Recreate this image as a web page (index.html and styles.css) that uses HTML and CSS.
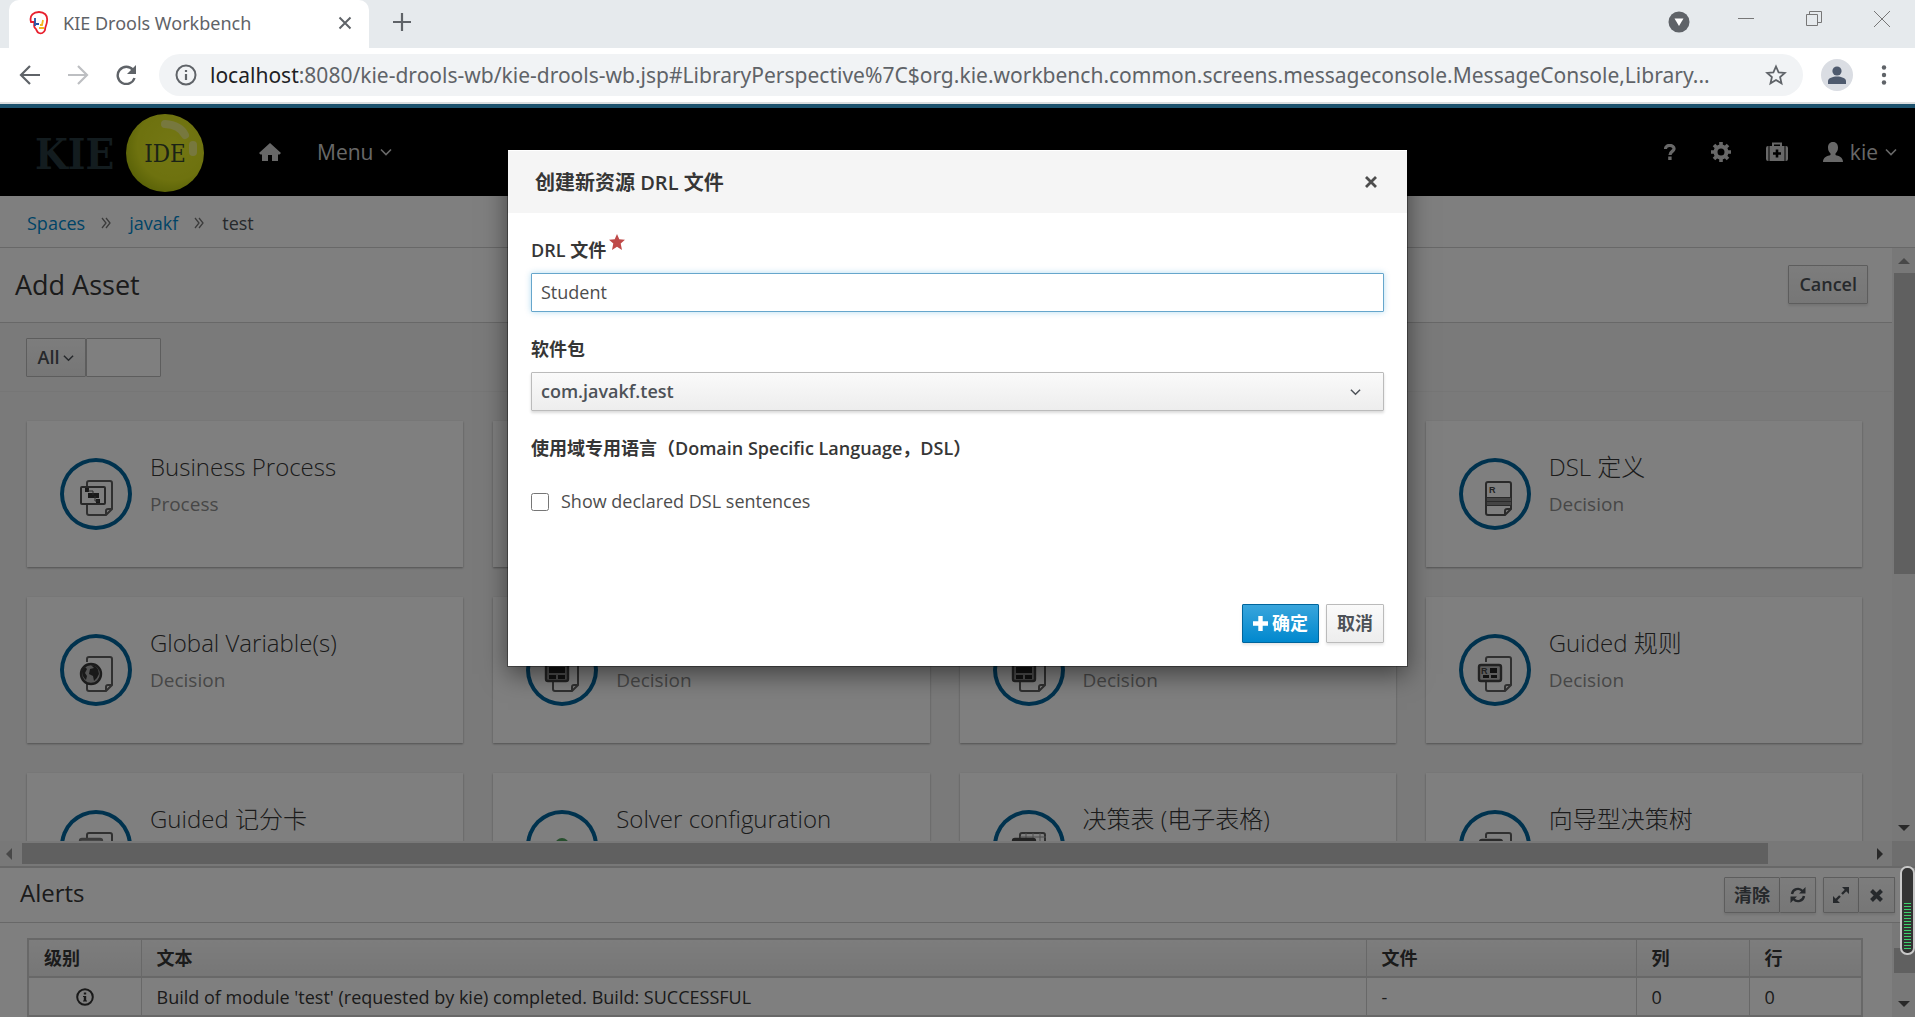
FILE: index.html
```html
<!DOCTYPE html>
<html lang="zh-CN">
<head>
<meta charset="utf-8">
<title>KIE Drools Workbench</title>
<link rel="stylesheet" href="styles.css">
</head>
<body>
<svg class="sprite" aria-hidden="true">
  <symbol id="chevron" viewBox="0 0 12 8"><path d="M1 1.5l5 5 5-5" fill="none" stroke="currentColor" stroke-width="1.6"/></symbol>
  <symbol id="angles" viewBox="0 0 10 12"><path d="M1 1l4 5-4 5M5 1l4 5-4 5" fill="none" stroke="currentColor" stroke-width="1.3"/></symbol>
  <symbol id="page" viewBox="0 0 72 72"><path d="M27 28v-3q0-2 2-2h21q2 0 2 2v26l-6 6H29q-2 0-2-2v-8M46 56v-3q0-2 2-2h4" fill="none" stroke="#606060" stroke-width="2"/></symbol>
  <symbol id="calc" viewBox="0 0 72 72"><use href="#page"/><rect x="20" y="21" width="22" height="26" rx="2" fill="#999" stroke="#444" stroke-width="2.4"/><path d="M23 33h16v6H23zM23 41h7v4h-7zM32 41h7v4h-7z" fill="#222"/></symbol>
</svg>

<header class="browser">
  <div class="tabstrip">
    <div class="tab">
      <svg class="favicon" width="20" height="24" viewBox="0 0 20 24"><path d="M2 11C0 4 5 1 10 1s9 3 8 9c0 4-2 5-2 9-1 3-4 4-6 3-3-1-2-4-4-5-2-2 0-4-1-6H2z" fill="#fff" stroke="#e8202e" stroke-width="1.800"/><path d="M6 7v8M7 13h3" stroke="#2453a6" stroke-width="1.800"/><path d="M14 9l-1 5h-2M10 17h5" fill="none" stroke="#f3b81b" stroke-width="1.800"/></svg>
      <span class="tab-title">KIE Drools Workbench</span>
      <button class="plain" aria-label="Close tab"><svg width="14" height="14" viewBox="0 0 14 14"><path d="M1.500 1.500l11 11m0-11l-11 11" stroke="#5f6368" stroke-width="2"/></svg></button>
    </div>
    <button class="plain new-tab" aria-label="New tab"><svg width="18" height="18" viewBox="0 0 18 18"><path d="M9 0v18M0 9h18" stroke="#5f6368" stroke-width="2.200"/></svg></button>
    <div class="window-buttons">
      <svg class="tab-search" width="22" height="22" viewBox="0 0 22 22"><circle cx="11" cy="11" r="10.500" fill="#5f6368"/><path d="M6.500 7.500h9L11 15z" fill="#fff"/></svg>
      <button class="plain" aria-label="Minimize"><svg width="16" height="16" viewBox="0 0 16 16"><path d="M0 7.500h16" stroke="#777"/></svg></button>
      <button class="plain" aria-label="Restore"><svg width="16" height="16" viewBox="0 0 16 16"><path d="M.5 3.500h11v11H.5zM3.500 3.500v-3h12v11h-4" fill="none" stroke="#777"/></svg></button>
      <button class="plain" aria-label="Close"><svg width="16" height="16" viewBox="0 0 16 16"><path d="M0 0l16 16M16 0L0 16" stroke="#777"/></svg></button>
    </div>
  </div>
  <div class="toolbar">
    <button class="plain" aria-label="Back"><svg width="22" height="20" viewBox="0 0 22 20"><path d="M21 10H2M11 1l-9 9 9 9" fill="none" stroke="#5f6368" stroke-width="2.200"/></svg></button>
    <button class="plain" aria-label="Forward"><svg width="22" height="20" viewBox="0 0 22 20"><path d="M1 10h19M11 1l9 9-9 9" fill="none" stroke="#bdbfc2" stroke-width="2.200"/></svg></button>
    <button class="plain" aria-label="Reload"><svg width="22" height="20" viewBox="0 0 22 20"><path d="M18 5a8.600 8.600 0 1 0 1.500 8" fill="none" stroke="#5f6368" stroke-width="2.400"/><path d="M21 0v9h-9z" fill="#5f6368"/></svg></button>
    <div class="address">
      <svg width="22" height="22" viewBox="0 0 22 22"><circle cx="11" cy="11" r="9.500" fill="none" stroke="#5f6368" stroke-width="2"/><path d="M11 10v6M11 6v2" stroke="#5f6368" stroke-width="2.200"/></svg>
      <span class="url"><b>localhost</b>:8080/kie-drools-wb/kie-drools-wb.jsp#LibraryPerspective%7C$org.kie.workbench.common.screens.messageconsole.MessageConsole,Library...</span>
      <svg width="22" height="22" viewBox="0 0 22 22"><path d="M11 2.500l2.600 5.800 6.200.6-4.700 4.200 1.400 6.200L11 16l-5.500 3.300 1.400-6.200-4.700-4.200 6.200-.6z" fill="none" stroke="#5f6368" stroke-width="1.800"/></svg>
    </div>
    <svg class="avatar" width="32" height="32" viewBox="0 0 32 32"><circle cx="16" cy="16" r="16" fill="#dadde3"/><circle cx="16" cy="12" r="4.600" fill="#4e5a6e"/><path d="M7 25v-3c0-3 5-4.500 9-4.500s9 1.500 9 4.500v3z" fill="#4e5a6e"/></svg>
    <button class="plain" aria-label="More"><svg width="6" height="20" viewBox="0 0 6 20"><circle cx="3" cy="2.500" r="2.200" fill="#5f6368"/><circle cx="3" cy="10" r="2.200" fill="#5f6368"/><circle cx="3" cy="17.500" r="2.200" fill="#5f6368"/></svg></button>
  </div>
</header>

<div class="app">
  <nav class="navbar">
    <a class="brand" href="#" aria-label="KIE IDE">
      <svg width="170" height="80" viewBox="0 0 170 80">
        <defs><radialGradient id="ball" cx=".6" cy=".4" r=".65"><stop offset="0" stop-color="#e8ee28"/><stop offset=".7" stop-color="#dce41e"/><stop offset="1" stop-color="#b4c410"/></radialGradient></defs>
        <text x="0" y="57" class="logo-kie">KIE</text>
        <circle cx="130" cy="41" r="39" fill="url(#ball)"/>
        <path d="M130 12q15 1 20 11" fill="none" stroke="#eef07c" stroke-width="8" stroke-linecap="round"/>
        <path d="M158 33v7" stroke="#eef07c" stroke-width="8" stroke-linecap="round"/>
        <text x="130" y="50" text-anchor="middle" class="logo-ide">IDE</text>
      </svg>
    </a>
    <a class="home" href="#" aria-label="Home"><svg width="22" height="18" viewBox="0 0 22 18"><path d="M11 0l11 10-1.500 1.500H19V18h-6v-6H9v6H3v-6.500H1.500L0 10z" fill="currentColor"/></svg></a>
    <button class="plain nav-menu">Menu <svg width="12" height="8"><use href="#chevron"/></svg></button>
    <div class="nav-tools">
      <a href="#" aria-label="Help"><svg width="12" height="16" viewBox="0 0 12 16"><path d="M1.500 5C1.500 0 10.500.5 10 5c-.3 2.500-4 2.500-4 6" fill="none" stroke="currentColor" stroke-width="3.200"/><path d="M4.200 12.500h3.400V16H4.200z" fill="currentColor"/></svg></a>
      <a href="#" aria-label="Settings"><svg width="20" height="20" viewBox="0 0 20 20"><circle cx="10" cy="10" r="5.500" fill="none" stroke="currentColor" stroke-width="4"/><path d="M10 0v4M10 16v4M0 10h4M16 10h4M3 3l3 3M14 14l3 3M3 17l3-3M14 6l3-3" stroke="currentColor" stroke-width="3.600"/></svg></a>
      <a href="#" aria-label="Administration"><svg width="22" height="20" viewBox="0 0 22 20"><path d="M7 5V1.500h8V5" fill="none" stroke="currentColor" stroke-width="2"/><path d="M0 6q0-2 2-2h.5v15H2q-2 0-2-2zM3.500 4h15v15h-15zM19.500 4h.5q2 0 2 2v11q0 2-2 2h-.5z" fill="currentColor"/><path d="M11 7.500v8M7 11.500h8" stroke="#000" stroke-width="2.600"/></svg></a>
      <a class="user" href="#"><svg width="20" height="20" viewBox="0 0 20 20"><path d="M10 0c3.500 0 5 2.500 5 5.500S14 10 12.500 11.500V13c3 1 7.500 2 7.500 7H0c0-5 4.500-6 7.500-7v-1.500C6 10 5 8.500 5 5.500S6.500 0 10 0z" fill="currentColor"/></svg><span>kie</span><svg width="12" height="8"><use href="#chevron"/></svg></a>
    </div>
  </nav>

  <ol class="breadcrumb">
    <li><a href="#">Spaces</a></li>
    <li><svg width="10" height="12"><use href="#angles"/></svg><a href="#">javakf</a></li>
    <li><svg width="10" height="12"><use href="#angles"/></svg><span>test</span></li>
  </ol>

  <main class="workspace">
    <section class="library">
      <div class="library-head"><h1>Add Asset</h1><button class="btn">Cancel</button></div>
      <form class="filter">
        <button type="button" class="btn filter-type">All <svg width="11" height="8"><use href="#chevron"/></svg></button><input type="text" aria-label="Filter">
      </form>
      <div class="cards">
        <article class="card"><svg class="card-icon" viewBox="0 0 72 72"><use href="#page"/><rect x="21" y="29" width="24" height="17" rx="1" fill="#fff" stroke="#505050" stroke-width="2"/><path d="M25 30h4v4h-4zM28 35h11v5H28zM36 41h4v4h-4z" fill="#333"/><path d="M28 33h5v4M35 38v5h4" fill="none" stroke="#555"/></svg><div><h2>Business Process</h2><p>Process</p></div></article>
        <article class="card"></article>
        <article class="card"></article>
        <article class="card"><svg class="card-icon" viewBox="0 0 72 72"><path d="M29 24h21q2 0 2 2v25l-6 6H29q-2 0-2-2V26q0-2 2-2zM46 57v-4q0-2 2-2h4" fill="none" stroke="#555" stroke-width="2"/><path d="M28 39h24v9H28z" fill="#888"/><path d="M27 39.500h25M27 43.500h25M27 47.500h25" stroke="#555"/><text x="30" y="35" class="glyph">R</text></svg><div><h2>DSL 定义</h2><p>Decision</p></div></article>

        <article class="card"><svg class="card-icon" viewBox="0 0 72 72"><use href="#page"/><circle cx="31" cy="40" r="10" fill="#aaa" stroke="#383838" stroke-width="2.400"/><path d="M31 31q8 1 8 9-2 5-5 7l-1-5-4-2 1-5 4-1zM22 37l3-4 2 2-2 4 2 3-1 4q-4-3-4-9z" fill="#333"/></svg><div><h2>Global Variable(s)</h2><p>Decision</p></div></article>
        <article class="card"><svg class="card-icon" viewBox="0 0 72 72"><use href="#calc"/></svg><div><h2>&nbsp;</h2><p>Decision</p></div></article>
        <article class="card"><svg class="card-icon" viewBox="0 0 72 72"><use href="#calc"/></svg><div><h2>&nbsp;</h2><p>Decision</p></div></article>
        <article class="card"><svg class="card-icon" viewBox="0 0 72 72"><use href="#page"/><rect x="20" y="31" width="22" height="16" rx="2" fill="#bbb" stroke="#444" stroke-width="2.400"/><text x="22" y="40" class="glyph">R</text><path d="M31 34h7v5h-7zM24 41h6v3h-6zM32 41h6v3h-6z" fill="#222"/></svg><div><h2>Guided 规则</h2><p>Decision</p></div></article>

        <article class="card"><svg class="card-icon" viewBox="0 0 72 72"><use href="#page"/><rect x="20" y="29" width="22" height="18" rx="2" fill="#999" stroke="#777" stroke-width="2.400"/></svg><div><h2>Guided 记分卡</h2></div></article>
        <article class="card"><svg class="card-icon" viewBox="0 0 72 72"><circle cx="36" cy="35" r="7" fill="#4f9f5c"/></svg><div><h2>Solver configuration</h2></div></article>
        <article class="card"><svg class="card-icon" viewBox="0 0 72 72"><use href="#page"/><path d="M33 23v8M40 23v8M47 23v8M27 27h26" stroke="#999"/><rect x="20" y="29" width="22" height="18" rx="2" fill="#444" stroke="#444" stroke-width="2.400"/></svg><div><h2>决策表 (电子表格)</h2></div></article>
        <article class="card"><svg class="card-icon" viewBox="0 0 72 72"><use href="#page"/><rect x="21" y="30" width="22" height="18" rx="2" fill="#fff" stroke="#555" stroke-width="2.400"/></svg><div><h2>向导型决策树</h2></div></article>
      </div>
    </section>
    <div class="scroll-v"><i class="arrow up faint"></i><i class="thumb"></i><i class="arrow down"></i></div>
    <div class="scroll-h"><i class="arrow left faint"></i><i class="thumb"></i><i class="arrow right"></i></div>
    <div class="scroll-corner"></div>
  </main>

  <section class="alerts">
    <div class="alerts-head">
      <h2>Alerts</h2>
      <div class="group">
        <button class="btn small">清除</button><button class="btn small icon" aria-label="Refresh"><svg width="16" height="16" viewBox="0 0 16 16"><path d="M2 7a6 6 0 0 1 10.500-3M14 9a6 6 0 0 1-10.500 3" fill="none" stroke="currentColor" stroke-width="2.400"/><path d="M15.500 0v6.500H9zM.5 16V9.500H7z" fill="currentColor"/></svg></button>
      </div>
      <div class="group">
        <button class="btn small icon" aria-label="Expand"><svg width="16" height="16" viewBox="0 0 16 16"><path d="M9 7l4-4M7 9l-4 4" stroke="currentColor" stroke-width="2.400"/><path d="M9 0h7v7zM0 9v7h7z" fill="currentColor"/></svg></button><button class="btn small icon" aria-label="Close"><svg width="13" height="13" viewBox="0 0 13 13"><path d="M1.500 1.500l10 10m0-10l-10 10" stroke="currentColor" stroke-width="4"/></svg></button>
      </div>
    </div>
    <div class="alerts-body">
      <table>
        <colgroup><col class="c-level"><col><col class="c-file"><col class="c-num"><col class="c-num"></colgroup>
        <thead><tr><th>级别</th><th>文本</th><th>文件</th><th>列</th><th>行</th></tr></thead>
        <tbody><tr><td class="level"><svg width="18" height="18" viewBox="0 0 18 18"><circle cx="9" cy="9" r="7.800" fill="none" stroke="#333" stroke-width="2"/><path d="M9 8v5M9 4.500v2" fill="none" stroke="#333" stroke-width="2.400"/><path d="M7 8.500h2M7 13h4" stroke="#333"/></svg></td><td>Build of module 'test' (requested by kie) completed. Build: SUCCESSFUL</td><td>-</td><td>0</td><td>0</td></tr></tbody>
      </table>
      <div class="scroll-v"><i class="thumb"></i><i class="arrow down"></i></div>
    </div>
  </section>

  <div class="backdrop">
    <form class="modal" role="dialog" aria-labelledby="modal-title">
      <div class="modal-head">
        <h3 id="modal-title">创建新资源 DRL 文件</h3>
        <button type="button" class="plain" aria-label="Close"><svg width="12" height="12" viewBox="0 0 12 12"><path d="M1 1l10 10M11 1L1 11" stroke="#4d4d4d" stroke-width="2.800"/></svg></button>
      </div>
      <div class="modal-body">
        <div class="field">
          <label for="file-name">DRL 文件<svg class="required" width="16" height="16" viewBox="0 0 16 16"><path d="M8 0l2.300 5.300 5.700.5-4.300 3.800L13 16l-5-3.300L3 16l1.300-6.400L0 5.800l5.700-.5z" fill="#bf4a49"/></svg></label>
          <input id="file-name" type="text" value="Student">
        </div>
        <div class="field">
          <label for="package">软件包</label>
          <div class="select"><select id="package"><option>com.javakf.test</option></select><svg width="11" height="8"><use href="#chevron"/></svg></div>
        </div>
        <fieldset class="field">
          <legend>使用域专用语言（Domain Specific Language，DSL）</legend>
          <label class="check"><input type="checkbox">Show declared DSL sentences</label>
        </fieldset>
      </div>
      <div class="modal-foot">
        <button type="button" class="btn primary"><svg width="15" height="15" viewBox="0 0 15 15"><path d="M7.500 0v15M0 7.500h15" stroke="#fff" stroke-width="4.400"/></svg>确定</button>
        <button type="button" class="btn">取消</button>
      </div>
    </form>
  </div>
</div>
<div class="meter" aria-hidden="true"><span></span></div>
</body>
</html>
```

FILE: styles.css
```css
* { box-sizing: border-box; }

body {
  margin: 0;
  height: 100vh;
  display: flex;
  flex-direction: column;
  overflow: hidden;
  font: 18px/27px "Open Sans", "Noto Sans CJK SC", sans-serif;
  color: #363636;
}

h1, h2, h3, p, ol, fieldset { margin: 0; padding: 0; }
a { color: #0088ce; text-decoration: none; }
svg { display: block; flex: none; }
button, input, select { font: inherit; color: inherit; border-radius: 1px; }
.sprite { position: absolute; width: 0; height: 0; }
.plain { display: flex; align-items: center; padding: 0; border: 0; background: none; }

/* Browser frame */
.browser { flex: none; background: #fff; border-bottom: 2px solid #dcdedf; font-family: "Noto Sans", sans-serif; }
.tabstrip { display: flex; height: 48px; padding-left: 9px; background: #e6eaed; }
.tab {
  display: flex;
  align-items: center;
  width: 360px;
  padding: 0 17px 2px 20px;
  background: #fff;
  border-radius: 10px 10px 0 0;
}
.tab-title { flex: 1; margin-left: 14px; color: #5f6368; }
.new-tab { margin: 0 0 4px 24px; }
.window-buttons { display: flex; align-items: flex-start; gap: 52px; margin-left: auto; padding: 11px 25px 0 0; }
.tab-search { margin-right: -4px; }
.toolbar { display: flex; align-items: center; gap: 26px; height: 54px; padding: 0 28px 0 19px; }
.address {
  flex: 1;
  min-width: 0;
  display: flex;
  align-items: center;
  gap: 13px;
  height: 42px;
  margin: 0 -8px 0 -4px;
  padding: 0 16px;
  border-radius: 21px;
  background: #f1f3f5;
}
.avatar { margin-right: 2px; }
.url { flex: 1; overflow: hidden; white-space: nowrap; font-size: 21px; color: #5f6368; }
.url b { font-weight: 400; color: #202124; }

/* Application */
.app {
  position: relative;
  flex: 1;
  min-height: 0;
  display: flex;
  flex-direction: column;
  border-top: 4px solid #39a5dc;
  background: #fff;
}
.navbar { flex: none; display: flex; align-items: center; height: 88px; padding: 0 18px 0 35px; background: #000; color: #d1d1d1; font-size: 21px; }
.navbar a { color: inherit; }
.brand { margin-right: 54px; }
.logo-kie { font: 700 42px "DejaVu Serif Condensed", "DejaVu Serif", serif; fill: #26383f; }
.logo-ide { font: 400 24px "DejaVu Serif Condensed", "DejaVu Serif", serif; fill: #37462c; }
.home { margin-right: 36px; }
.nav-menu { gap: 7px; }
.nav-tools { display: flex; align-items: center; gap: 35px; margin-left: auto; }
.user { display: flex; align-items: center; gap: 7px; }

.breadcrumb { flex: none; display: flex; align-items: center; height: 52px; padding: 3px 0 0 27px; list-style: none; border-bottom: 1px solid #d1d1d1; color: #4d5258; }
.breadcrumb li { display: flex; align-items: center; }
.breadcrumb svg { margin: 0 18px 0 16px; color: #777; }

.workspace { flex: 1; min-height: 0; display: grid; grid-template: minmax(0, 1fr) 25px / minmax(0, 1fr) 23px; }
.library { overflow: hidden; background: #f5f5f5; }
.library-head { display: flex; align-items: center; justify-content: space-between; height: 75px; padding: 0 24px 2px 15px; background: #fff; border-bottom: 1px solid #d1d1d1; }
.library-head h1 { font-size: 27px; font-weight: 400; }
.btn {
  display: inline-flex;
  align-items: center;
  justify-content: center;
  gap: 4px;
  height: 39px;
  padding: 0 10px;
  border: 1px solid #bbb;
  background: linear-gradient(#fafafa, #ededed);
  box-shadow: 0 2px 3px rgba(3, 3, 3, .1);
  color: #4d5258;
  font-weight: 600;
}
.filter { display: flex; height: 69px; padding: 15px 26px; border-bottom: 1px solid #ededed; }
.filter-type { width: 60px; padding: 0; box-shadow: none; }
.filter input { width: 75px; height: 39px; padding: 0 10px; border: 1px solid #bbb; background: #fff; }
.cards { display: grid; grid-template-columns: repeat(4, 1fr); gap: 30px; padding: 29px 30px 30px 27px; }
.card { display: flex; gap: 18px; height: 146px; padding: 28px 33px; background: #fff; box-shadow: 0 1px 2px rgba(3, 3, 3, .35); }
.card-icon { width: 72px; height: 72px; margin-top: 9px; border-radius: 50%; box-shadow: inset 0 0 0 4px #00659c; }
.card h2 { font-size: 24px; font-weight: 300; line-height: 36px; white-space: nowrap; }
.card p { margin-top: 5px; font-size: 19px; line-height: 28px; color: #8f8f8f; }
.glyph { font: 700 9px "Liberation Sans", sans-serif; fill: #444; }

/* Scrollbars */
.scroll-v, .scroll-h { display: flex; align-items: center; background: #f1f1f1; }
.scroll-v { flex-direction: column; padding: 10px 0; }
.scroll-h { padding: 0 9px 0 6px; }
.scroll-corner { background: #dcdcdc; }
.thumb { background: #c1c1c1; }
.scroll-v .thumb { width: 21px; height: 301px; margin: 9px 0 auto 2px; }
.scroll-h .thumb { width: 93%; height: 21px; margin: 0 auto 0 10px; }
.arrow { width: 0; height: 0; border: 6px solid transparent; }
.arrow.up { border-top: 0; border-bottom-color: #505050; }
.arrow.down { border-bottom: 0; border-top-color: #505050; }
.arrow.left { border-left: 0; border-right-color: #505050; }
.arrow.right { border-right: 0; border-left-color: #505050; }
.arrow.faint { opacity: .6; }

/* Alerts */
.alerts { flex: none; border-top: 2px solid #d1d1d1; }
.alerts-head { display: flex; align-items: center; gap: 7px; height: 55px; padding: 0 20px; border-bottom: 1px solid #d1d1d1; }
.alerts-head h2 { flex: 1; padding-bottom: 5px; font-size: 24px; font-weight: 400; }
.group { display: flex; }
.small { height: 36px; padding: 0 9px; }
.icon { width: 36px; padding: 0; }
.group .btn + .btn { border-left: 0; }
.alerts-body { display: grid; grid-template-columns: minmax(0, 1fr) 23px; height: 94px; overflow: hidden; }
.alerts-body .scroll-v .thumb { height: 25px; margin-top: 15px; }
.alerts table { width: calc(100% - 56px); height: 79px; margin: 15px 0 0 27px; table-layout: fixed; border-collapse: collapse; border: 2px solid #d1d1d1; }
.c-level { width: 113px; }
.c-file { width: 270px; }
.c-num { width: 113px; }
.alerts th, .alerts td { height: 38px; padding: 1px 15px 0; text-align: left; border: 1px solid #d1d1d1; white-space: nowrap; overflow: hidden; }
.alerts th { font-weight: 700; border-bottom-width: 2px; background: linear-gradient(#fafafa, #ededed); }
.alerts .level { padding: 0; }
.alerts .level svg { margin: 0 auto; }

/* Dialog */
.backdrop {
  position: absolute;
  inset: -4px 0 0;
  display: flex;
  align-items: flex-start;
  justify-content: center;
  padding-top: 46px;
  background: rgba(0, 0, 0, .5);
}
.modal { display: flex; flex-direction: column; width: 899px; min-height: 516px; padding-top: 1px; background: #fff; box-shadow: 0 0 0 1px rgba(0, 0, 0, .35), 0 8px 24px rgba(0, 0, 0, .5); }
.modal-head { display: flex; align-items: center; justify-content: space-between; height: 62px; padding: 0 30px 0 27px; background: #f5f5f5; }
.modal-head h3 { font-size: 20px; font-weight: 600; }
.modal-body { display: grid; gap: 24px; padding: 24px 23px; }
.field { display: grid; gap: 9px; min-width: 0; border: 0; }
.field > label, .field legend { display: flex; padding: 0; font-weight: 600; }
.required { margin: -3px 0 0 3px; }
.field input[type="text"], .select select { width: 100%; height: 39px; padding: 0 9px; border: 1px solid #bbb; }
.field input[type="text"] { padding-bottom: 2px; border-color: #66a6cc; box-shadow: 0 0 6px rgba(0, 136, 206, .3); color: #4d4d4d; }
.select { position: relative; }
.select select { appearance: none; background: linear-gradient(#fafafa, #ededed); box-shadow: 0 2px 3px rgba(3, 3, 3, .15); color: #4d5258; font-weight: 600; }
.select svg { position: absolute; right: 23px; top: 16px; color: #4d5258; }
.field .check { align-items: center; gap: 12px; margin-top: 26px; font-weight: 400; color: #4d4d4d; }
.check input { width: 18px; height: 18px; margin: 0; }
.modal-foot { display: flex; justify-content: flex-end; gap: 7px; margin-top: auto; padding: 0 23px 23px; }
.primary { background: linear-gradient(#39a5dc, #0088ce); border-color: #00659c; color: #fff; }

/* Level meter floating over the window edge */
.meter { position: absolute; right: 0; bottom: 62px; display: flex; align-items: flex-end; width: 15px; height: 89px; padding: 3px 2px; border: 2px solid #c8c8c8; border-radius: 7px; background: #333; }
.meter span { flex: 1; height: 47px; background: repeating-linear-gradient(#3bd16b 0 1px, #333 1px 3px); }
```
